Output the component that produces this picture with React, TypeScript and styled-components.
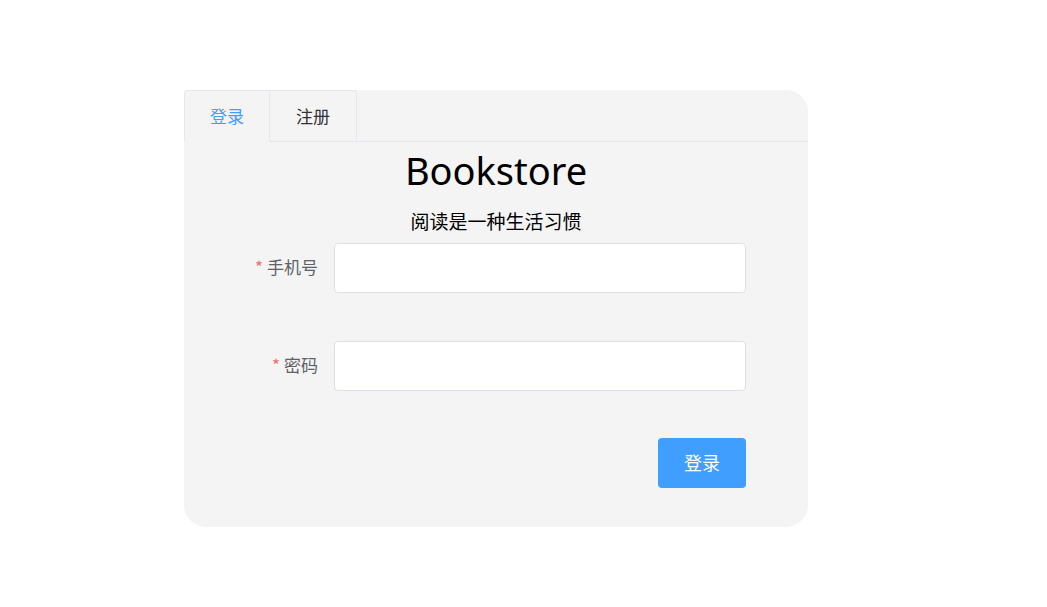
import styled, { createGlobalStyle } from "styled-components";

const GlobalStyle = createGlobalStyle`
    body {
        margin: 0;
        background: #fff;
        font-family: "Noto Sans", "Noto Sans CJK SC", sans-serif;
    }
`;

const Page = styled.div`
    padding: 90px 0 0 184px;
`;

const Card = styled.div`
    width: 624px;
    height: 437px;
    background: #f4f4f4;
    border-radius: 4px 22px 22px 22px;
    display: flex;
    flex-direction: column;
    overflow: hidden;
`;

const TabHeader = styled.div`
    display: flex;
    height: 51px;
    border-bottom: 1px solid #e4e7ed;
`;

const Tab = styled.div<{ $active?: boolean }>`
    width: ${(p) => (p.$active ? "86px" : "87px")};
    display: flex;
    align-items: center;
    justify-content: center;
    padding-bottom: 2px;
    font-family: "Noto Sans CJK SC", sans-serif;
    font-size: 17px;
    color: ${(p) => (p.$active ? "#409eff" : "#303133")};
    border: 1px solid #e4e7ed;
    border-bottom: ${(p) => (p.$active ? "1px solid #f4f4f4" : "none")};
    border-left: ${(p) => (p.$active ? "1px solid #e4e7ed" : "none")};
    border-radius: ${(p) => (p.$active ? "4px 0 0 0" : "0 4px 0 0")};
    margin-bottom: ${(p) => (p.$active ? "-1px" : "0")};
    box-sizing: border-box;
`;

const Title = styled.h1`
    margin: 4px 0 0;
    text-align: center;
    font-family: "Noto Sans", sans-serif;
    font-weight: 400;
    font-size: 38px;
    line-height: 48px;
    color: #000;
`;

const Subtitle = styled.div`
    margin-top: 15px;
    text-align: center;
    font-family: "Noto Sans CJK SC", sans-serif;
    font-size: 19px;
    line-height: 24px;
    color: #000;
`;

const Form = styled.form`
    margin: 10px 0 0 49px;
    width: 513px;
    display: flex;
    flex-direction: column;
    gap: 48px;
`;

const Row = styled.div`
    display: flex;
    align-items: center;
`;

const Label = styled.label`
    width: 85px;
    padding: 0 16px 3px 0;
    text-align: right;
    font-family: "Noto Sans CJK SC", sans-serif;
    font-size: 17px;
    color: #606266;
    &::before {
        content: "*";
        color: #f56c6c;
        margin-right: 4px;
    }
`;

const Input = styled.input`
    width: 412px;
    height: 50px;
    box-sizing: border-box;
    border: 1px solid #dcdfe6;
    border-radius: 4px;
    background: #fff;
    outline: none;
    padding: 0 15px;
    font-size: 16px;
`;

const Actions = styled.div`
    display: flex;
    justify-content: flex-end;
    margin-top: -1px;
`;

const Button = styled.button`
    width: 88px;
    height: 50px;
    padding-bottom: 3px;
    border: none;
    border-radius: 4px;
    background: #409eff;
    color: #fff;
    font-family: "Noto Sans CJK SC", sans-serif;
    font-size: 18px;
`;

export default function App() {
    return (
        <Page>
            <GlobalStyle />
            <Card>
                <TabHeader>
                    <Tab $active>登录</Tab>
                    <Tab>注册</Tab>
                </TabHeader>
                <Title>Bookstore</Title>
                <Subtitle>阅读是一种生活习惯</Subtitle>
                <Form onSubmit={(e) => e.preventDefault()}>
                    <Row>
                        <Label>手机号</Label>
                        <Input type="text" />
                    </Row>
                    <Row>
                        <Label>密码</Label>
                        <Input type="password" />
                    </Row>
                    <Actions>
                        <Button type="submit">登录</Button>
                    </Actions>
                </Form>
            </Card>
        </Page>
    );
}
